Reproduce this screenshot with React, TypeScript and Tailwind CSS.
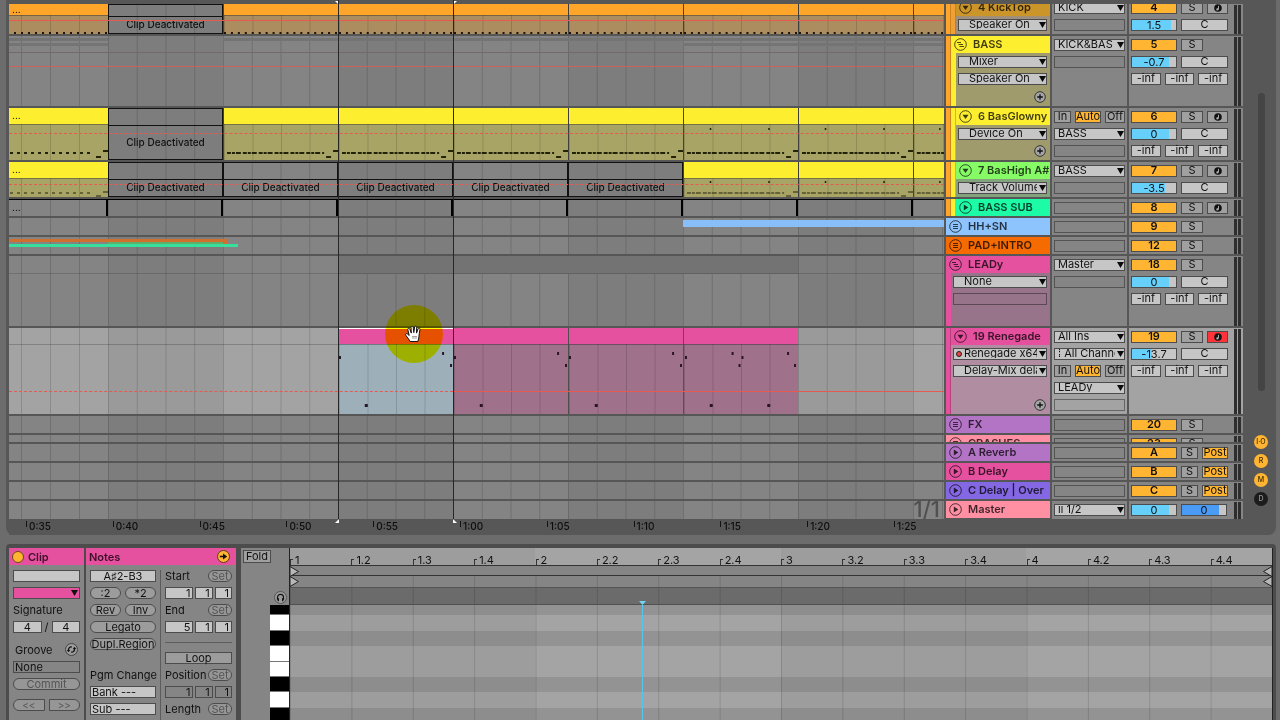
import React from 'react';

type Mixer = {
  num?: string;
  solo?: boolean;
  arm?: 'off' | 'on';
  post?: boolean;
  vol?: [string, number];
  pan?: string;
  cue?: [string, number];
  sends?: boolean;
};

type Track = {
  id: string;
  name: string;
  icon: 'fold' | 'group' | 'lines' | 'play';
  height: string;
  stripes?: string[];
  inner?: string;
  head: string;
  body?: string;
  controls?: string[];
  emptySlot?: boolean;
  add?: boolean;
  record?: boolean;
  io: string[];
  mixer: Mixer;
  selected?: boolean;
  bottom?: boolean;
  cell: (i: number) => React.ReactNode;
  overlay?: React.ReactNode;
};

const CELLS = [0, 1, 2, 3, 4, 5, 6, 7, 8];
const gridCols = 'grid grid-cols-[99fr_115fr_115fr_115fr_115fr_115fr_115fr_115fr_31fr]';

function beatLines(i: number) {
  const size =
    i === 0 ? 'bg-[length:29px_100%] bg-right' : i === 8 ? 'bg-[length:29px_100%]' : 'bg-[length:25%_100%]';
  return `bg-[linear-gradient(to_right,#00000026_1px,transparent_1px)] ${size}`;
}

function viewBox(i: number, h: number) {
  return i === 0 ? `16 0 99 ${h}` : i === 8 ? `0 0 31 ${h}` : `0 0 115 ${h}`;
}

function Dots() {
  return (
    <div className="flex h-full items-center px-[3px] pb-[2px] text-[10px] leading-[10px]">...</div>
  );
}

function Clip({ i, head, body, headHeight, children, more }: {
  i: number; head: string; body: string; headHeight: string; children?: React.ReactNode; more?: boolean;
}) {
  return (
    <div className={`flex h-full flex-col ${i > 0 ? 'border-l border-black/40' : ''}`}>
      <div className={`${headHeight} shrink-0 ${head}`}>{more && <Dots />}</div>
      <div className={`min-h-0 flex-1 border-t border-black/30 ${body} ${beatLines(i)}`}>{children}</div>
    </div>
  );
}

function Deactivated({ headHeight }: { headHeight: string }) {
  return (
    <div className="flex h-full flex-col border border-[#111]">
      <div className={`${headHeight} shrink-0 border-b border-[#111]`} />
      <div className="flex min-h-0 flex-1 items-center justify-center pb-[2px] text-[10px] leading-[12px] font-medium text-[#111]">
        Clip Deactivated
      </div>
    </div>
  );
}

function BassNotes({ i, h, y, low, high }: { i: number; h: number; y: number; low: number; high: number }) {
  const late = i >= 6;
  return (
    <svg className="block h-full w-full" viewBox={viewBox(i, h)} preserveAspectRatio="none">
      <path
        d={`M3 ${y}H101`}
        stroke="#222208"
        strokeWidth={h > 20 ? 2 : 1}
        strokeDasharray={i === 0 ? '3 4' : '4 1 3 1 5 2'}
      />
      <path d={`M103 ${low}h5M110 ${high}h5`} stroke="#222208" strokeWidth={h > 20 ? 2 : 1} />
      {late && <path d={`M26 ${h > 20 ? 4 : 3}h1.500M85 ${h > 20 ? 4 : 3}h1.500`} stroke="#222208" strokeWidth={2} />}
    </svg>
  );
}

function LeadNotes({ i }: { i: number }) {
  const spots: [number, number][] =
    i === 6
      ? [[1, 12], [48, 8], [58, 12], [55, 20], [104, 8], [111, 20]]
      : [[0, 12], [104, 8], [112, 20]];
  const lows = i === 6 ? [26, 84] : [26];
  return (
    <svg className="block h-full w-full" viewBox="0 0 115 69" preserveAspectRatio="none" fill="#2a1526">
      {spots.map(([x, y]) => (
        <rect key={`${x}-${y}`} x={x} y={y - 1} width="2" height="3" />
      ))}
      {lows.map((x) => (
        <rect key={x} x={x} y="59" width="3" height="3" />
      ))}
    </svg>
  );
}

const yellowClip = (i: number, h: number, y: number, low: number, high: number, headHeight: string) => (
  <Clip i={i} head="bg-[#fdee30]" body="bg-[#a8a466]" headHeight={headHeight} more={i === 0}>
    <BassNotes i={i} h={h} y={y} low={low} high={high} />
  </Clip>
);

const tracks: Track[] = [
  {
    id: 'kicktop', name: '4 KickTop', icon: 'fold', height: 'h-[32px]',
    stripes: ['bg-[#ffa52a]', 'bg-[#f0a035]'], head: 'bg-[#cb952a]', body: 'bg-[#a0907a]',
    controls: ['Speaker On'], io: ['KICK', ''],
    mixer: { num: '4', solo: true, arm: 'off', vol: ['1.5', 88], pan: 'C' }, bottom: true,
    cell: (i) =>
      i === 1 ? (
        <Deactivated headHeight="h-[12px]" />
      ) : (
        <Clip i={i} head="bg-[#ffa52a]" body="bg-[#ab8d60]" headHeight="h-[11px]" more={i === 0}>
          <svg className="block h-full w-full" viewBox={viewBox(i, 18)} preserveAspectRatio="none">
            <path d="M0 17H115" stroke="#1c1408" strokeWidth="2" strokeDasharray="2 5" />
          </svg>
        </Clip>
      ),
    overlay: <div className="absolute inset-x-0 top-4 h-px bg-[#e85a50]" />,
  },
  {
    id: 'bass', name: 'BASS', icon: 'group', height: 'h-[72px]',
    stripes: ['bg-[#ffa52a]'], inner: 'bg-[#fdee30]', head: 'bg-[#fdee30]', body: 'bg-[#a09b6c]',
    controls: ['Mixer', 'Speaker On'], add: true, io: ['KICK&BAS', ''],
    mixer: { num: '5', solo: true, vol: ['-0.7', 84], pan: 'C', sends: true },
    cell: (i) => (
      <div className="flex h-full flex-col pt-[2px]">
        <div className={`h-[3px] ${i === 1 ? '' : 'bg-[#747474]'}`} />
        <div className={`mt-[2px] h-[3px] ${i === 0 || i >= 6 ? 'bg-[#747474]' : ''}`} />
        <div className="mt-[6px] border-t border-[#76686a]" />
      </div>
    ),
    overlay: <div className="absolute inset-x-0 top-[30px] h-px bg-[#cc625a]" />,
  },
  {
    id: 'basglowny', name: '6 BasGlowny', icon: 'fold', height: 'h-[54px]',
    stripes: ['bg-[#ffa52a]', 'bg-[#fdee30]'], head: 'bg-[#fdee30]', body: 'bg-[#a09b6c]',
    controls: ['Device On'], add: true, io: ['#monitor', 'BASS', ''],
    mixer: { num: '6', solo: true, arm: 'off', vol: ['0', 84], pan: 'C', sends: true },
    cell: (i) => (i === 1 ? <Deactivated headHeight="h-[17px]" /> : yellowClip(i, 35, 28, 32, 26, 'h-[16px]')),
    overlay: <div className="absolute inset-x-0 top-[25px] border-t border-dashed border-[#e85a50]" />,
  },
  {
    id: 'bashigh', name: '7 BasHigh A#', icon: 'fold', height: 'h-[37px]',
    stripes: ['bg-[#ffa52a]', 'bg-[#fdee30]'], head: 'bg-[#86fb66]', body: 'bg-[#84a27b]',
    controls: ['Track Volume'], io: ['BASS', ''],
    mixer: { num: '7', solo: true, arm: 'off', vol: ['-3.5', 76], pan: 'C' },
    cell: (i) => (i > 0 && i < 6 ? <Deactivated headHeight="h-[17px]" /> : yellowClip(i, 18, 14, 17, 13, 'h-[16px]')),
    overlay: <div className="absolute inset-x-0 top-[22px] border-t border-dashed border-[#e85a50]" />,
  },
  {
    id: 'basssub', name: 'BASS SUB', icon: 'play', height: 'h-[19px]',
    stripes: ['bg-[#ffa52a]', 'bg-[#fdee30]'], head: 'bg-[#1dfba6]', io: [''],
    mixer: { num: '8', solo: true, arm: 'off' },
    cell: (i) => (
      <div className={`h-full border-t border-black ${i < 8 ? 'border-r-2' : ''}`}>
        {i === 0 ? <Dots /> : null}
      </div>
    ),
  },
  {
    id: 'hh', name: 'HH+SN', icon: 'lines', height: 'h-[19px]', head: 'bg-[#8ec4fd]', io: [''],
    mixer: { num: '9', solo: true },
    cell: (i) => (i >= 6 ? <div className="mt-[2px] h-[7px] bg-[#88bffb]" /> : null),
  },
  {
    id: 'pad', name: 'PAD+INTRO', icon: 'lines', height: 'h-[19px]', head: 'bg-[#f66b00]', io: [''],
    mixer: { num: '12', solo: true },
    cell: (i) =>
      i < 3 ? (
        <div className="pt-[2px]">
          <div className={`h-[3px] bg-[#d0702f] ${i === 2 ? 'w-[5px]' : ''}`} />
          <div className={`h-[2px] ${i === 1 ? 'bg-[#5fae6c]' : i === 2 ? 'w-[4px] bg-[#d0702f]' : ''}`} />
          <div className={`h-[3px] bg-[#36e09c] ${i === 2 ? 'w-[15px]' : ''}`} />
        </div>
      ) : null,
  },
  {
    id: 'leady', name: 'LEADy', icon: 'group', height: 'h-[72px]',
    inner: 'bg-[#e6519f]', head: 'bg-[#e6519f]', body: 'bg-[#97748a]',
    controls: ['None'], emptySlot: true, io: ['Master', ''],
    mixer: { num: '18', solo: true, vol: ['0', 84], pan: 'C', sends: true },
    cell: (i) => (
      <div className={`h-[18px] border-b border-black/15 ${i >= 3 && i <= 6 ? 'bg-[#737373]' : ''}`} />
    ),
  },
  {
    id: 'renegade', name: '19 Renegade', icon: 'fold', height: 'h-[88px]',
    stripes: ['bg-[#e6519f]'], head: 'bg-[#e6519f]', body: 'bg-[#b18da2]',
    controls: ['Renegade x64', 'Delay-Mix dela'], record: true, add: true,
    io: ['All Ins', '⁞ All Channels', '#monitor', 'LEADy', ''],
    mixer: { num: '19', solo: true, arm: 'on', vol: ['-13.7', 45], pan: 'C', sends: true }, selected: true,
    cell: (i) =>
      i >= 3 && i <= 6 ? (
        <Clip
          i={i}
          head={i === 3 ? 'bg-[#e6519f] border-t border-white' : 'bg-[#e6519f]'}
          body={i === 3 ? 'bg-[#9db0ba]' : 'bg-[#a0718b]'}
          headHeight="h-[16px]"
        >
          <LeadNotes i={i} />
        </Clip>
      ) : (
        <div className="h-[17px] border-b border-black/20" />
      ),
    overlay: (
      <div className="absolute inset-x-0 top-[63px] flex">
        <div className="w-[47.5%] border-t border-dashed border-[#e85a50]" />
        <div className="h-px flex-1 bg-[#e85a50]" />
      </div>
    ),
  },
  {
    id: 'fx', name: 'FX', icon: 'lines', height: 'h-[19px]', head: 'bg-[#b474c6]', io: [''],
    mixer: { num: '20', solo: true }, cell: () => null,
  },
  {
    id: 'crashes', name: 'CRASHES', icon: 'lines', height: 'h-[9px]', head: 'bg-[#ff90a4]', io: [''],
    mixer: { num: '23', solo: true }, cell: () => null,
  },
  {
    id: 'reverb', name: 'A Reverb', icon: 'play', height: 'h-[19px]', head: 'bg-[#b474c6]', io: [''],
    mixer: { num: 'A', solo: true, post: true }, cell: () => null,
  },
  {
    id: 'delay', name: 'B Delay', icon: 'play', height: 'h-[19px]', head: 'bg-[#e6519f]', io: [''],
    mixer: { num: 'B', solo: true, post: true }, cell: () => null,
  },
  {
    id: 'over', name: 'C Delay | Over', icon: 'play', height: 'h-[19px]', head: 'bg-[#8467e2]', io: [''],
    mixer: { num: 'C', solo: true, post: true }, cell: () => null,
  },
  {
    id: 'master', name: 'Master', icon: 'play', height: 'h-[20px]', head: 'bg-[#ff90a4]', io: ['ⅱ 1/2'],
    mixer: { vol: ['0', 84], cue: ['0', 84] }, cell: () => null,
  },
];

function TrackIcon({ kind }: { kind: Track['icon'] }) {
  return (
    <svg viewBox="0 0 13 13" className="h-[13px] w-[13px] shrink-0" fill="none" stroke="#000000b0" strokeWidth="1">
      <circle cx="6.500" cy="6.500" r="5.800" />
      {kind === 'fold' && <path d="M3.500 4.800h6L6.500 9z" fill="#000000c0" stroke="none" />}
      {kind === 'play' && <path d="M4.800 3.500v6L9.300 6.500z" fill="#000000c0" stroke="none" />}
      {kind === 'lines' && <path d="M4 4.500h5M4 6.500h5M4 8.500h5" />}
      {kind === 'group' && <path d="M3 4.500h4M4.500 6.500h4.500M5.500 8.500h4.500" />}
    </svg>
  );
}

function Dropdown({ label, value, pad = 'pl-[3px]' }: { label: string; value: string; pad?: string }) {
  return (
    <div className="relative h-[12px] shrink-0">
      <select
        aria-label={label}
        className={`block h-full w-full appearance-none overflow-hidden border border-[#4c4c4c] bg-[#c6c6c6] text-clip ${pad} pr-[9px] pb-[1px] text-[11px] leading-[9px] text-[#111]`}
      >
        <option>{value}</option>
      </select>
      <svg className="pointer-events-none absolute top-[3px] right-[1px] h-[6px] w-[7px]" viewBox="0 0 7 6">
        <path d="M0 0h7L3.500 6z" fill="#0a0a0a" />
      </svg>
    </div>
  );
}

const slot = 'h-[12px] shrink-0 border border-[#00000060]';
const boxBtn = 'flex h-[12px] items-center justify-center border border-[#4c4c4c] pb-[1px] text-[11px] leading-[9px] text-[#111]';

function Monitor() {
  return (
    <div className="flex h-[12px] shrink-0 gap-[4px]">
      <button className={`${boxBtn} w-[17px] bg-[#a0a0a0]`}>In</button>
      <button className={`${boxBtn} w-[26px] bg-[#ffb532]`}>Auto</button>
      <button className={`${boxBtn} flex-1 bg-[#a0a0a0]`}>Off</button>
    </div>
  );
}

function Fader({ label, value, pct, color }: { label: string; value: string; pct: number; color: string }) {
  return (
    <input
      aria-label={label}
      defaultValue={value}
      className="h-[12px] w-[46px] border border-[#4c4c4c] pb-[1px] text-center text-[11px] leading-[9px] text-[#111]"
      style={{ background: `linear-gradient(to right, ${color} ${pct}%, #c6c6c6 ${pct}%)` }}
    />
  );
}

function MixerCell({ t }: { t: Track }) {
  const m = t.mixer;
  return (
    <div className="flex w-[97px] flex-col gap-[5px] pt-[3px]">
      {m.num && (
        <div className="flex h-[12px] shrink-0 gap-[4px]">
          <button className={`${boxBtn} w-[46px] bg-[#ffb532] font-semibold`}>{m.num}</button>
          <button className={`${boxBtn} ${m.post ? 'w-[17px]' : 'w-[22px]'} bg-[#a0a0a0]`}>S</button>
          {m.post && <button className={`${boxBtn} flex-1 bg-[#ffb532]`}>Post</button>}
          {m.arm && (
            <button aria-label="Arm" className={`${boxBtn} flex-1 ${m.arm === 'on' ? 'bg-[#ff3339]' : 'bg-[#a0a0a0]'}`}>
              <svg viewBox="0 0 8 8" className="h-[8px] w-[8px]">
                <circle cx="4" cy="4" r="3.800" fill="#111" />
                <path d="M4.500 1.800v3.600" stroke="#bbb" strokeWidth=".9" />
                <circle cx="3.400" cy="5.400" r="1.100" fill="#bbb" />
              </svg>
            </button>
          )}
        </div>
      )}
      {m.vol && (
        <div className="flex h-[12px] shrink-0 gap-[4px]">
          <Fader label={`${t.name} volume`} value={m.vol[0]} pct={m.vol[1]} color="#66cffa" />
          {m.cue ? (
            <Fader label="Cue volume" value={m.cue[0]} pct={m.cue[1]} color="#4a9bf6" />
          ) : (
            <button className={`${boxBtn} flex-1 bg-[#c6c6c6]`}>{m.pan}</button>
          )}
        </div>
      )}
      {m.sends && (
        <div className="grid h-[12px] shrink-0 grid-cols-3 gap-[4px]">
          {['Peak', 'Send A', 'Send B'].map((s) => (
            <button key={s} aria-label={`${s} -inf`} className={`${boxBtn} bg-[#c6c6c6]`}>-inf</button>
          ))}
        </div>
      )}
    </div>
  );
}

function TrackRow({ t }: { t: Track }) {
  const align = t.bottom ? 'justify-end' : '';
  const bg = t.selected ? 'bg-[#a3a3a3]' : 'bg-[#858585]';
  return (
    <div className={`flex ${t.height} gap-[2px] overflow-hidden`}>
      <div className="relative min-w-0 flex-1 overflow-hidden border-b-2 border-[#565656]">
        <div className={`${gridCols} h-full`}>
          {CELLS.map((i) => {
            const shade = t.selected
              ? i % 2 ? 'bg-[#9a9a9a]' : 'bg-[#a3a3a3]'
              : i % 2 ? 'bg-[#7d7d7d]' : 'bg-[#848484]';
            return (
              <div key={i} className={`min-w-0 overflow-hidden ${shade} ${beatLines(i)}`}>
                {t.cell(i)}
              </div>
            );
          })}
        </div>
        {t.overlay}
      </div>
      <div className="flex w-[104px] overflow-hidden border-b-2 border-[#565656]">
        {t.stripes?.map((s, n) => (
          <div key={n} className={`w-[5px] shrink-0 border-r border-black/20 ${s}`} />
        ))}
        <div className={`flex min-w-0 flex-1 flex-col ${align}`}>
          <div className={`flex h-[17px] shrink-0 items-center gap-[6px] pl-[3px] ${t.head}`}>
            <TrackIcon kind={t.icon} />
            <span className="truncate pb-[1px] text-[11px] leading-[14px] font-semibold text-black/75">{t.name}</span>
          </div>
          {t.controls && (
            <div className={`flex ${t.bottom ? 'shrink-0' : 'min-h-0 flex-1'}`}>
              {t.inner && <div className={`w-[5px] shrink-0 ${t.inner}`} />}
              <div className={`relative flex min-w-0 flex-1 flex-col gap-[5px] py-[3px] pr-[3px] pl-[2px] ${t.body}`}>
                {t.controls.map((c, n) => (
                  <div key={c} className="relative">
                    <Dropdown label={`${t.name} control ${n + 1}`} value={c} pad="pl-[10px]" />
                    {t.record && n === 0 && (
                      <span className="absolute top-[3px] left-[3px] h-[6px] w-[6px] rounded-full border border-[#222] bg-[#ee4040]" />
                    )}
                  </div>
                ))}
                {t.emptySlot && <div className={slot} />}
                {t.add && (
                  <button aria-label="Add automation lane" className="absolute right-[4px] bottom-[3px] h-[12px] w-[12px]">
                    <svg viewBox="0 0 12 12" className="h-full w-full">
                      <circle cx="6" cy="6" r="5.300" fill="#a5a5a5" stroke="#333" />
                      <path d="M6 3.200v5.600M3.200 6h5.600" stroke="#111" strokeWidth="1.300" />
                    </svg>
                  </button>
                )}
              </div>
            </div>
          )}
        </div>
      </div>
      <div className={`flex w-[75px] flex-col gap-[5px] overflow-hidden border-b-2 border-[#565656] px-[2px] pt-[3px] ${bg} ${t.bottom ? 'justify-end pb-[3px]' : ''}`}>
        {t.io.map((v, n) =>
          v === '' ? (
            <div key={n} className={slot} />
          ) : v === '#monitor' ? (
            <Monitor key={n} />
          ) : (
            <Dropdown key={n} label={`${t.name} routing ${n + 1}`} value={v} />
          ),
        )}
      </div>
      <div className={`flex w-[114px] gap-[6px] overflow-hidden border-b-2 border-[#565656] pl-[2px] ${bg}`}>
        <div className={`flex w-[97px] shrink-0 flex-col ${t.bottom ? 'justify-end pb-[3px]' : ''}`}>
          <MixerCell t={t} />
        </div>
        <div className="flex h-full shrink-0 gap-[1px] pt-[1px]">
          <div className="w-[3px] bg-[#2e2e2e]" />
          <div className="w-[3px] bg-[#2e2e2e]" />
        </div>
      </div>
    </div>
  );
}

function Hand() {
  return (
    <svg viewBox="0 0 20 20" className="h-[20px] w-[20px]">
      <path
        d="M6.200 17.500C5 15.200 3.200 13.200 1.800 11.300c-.8-1.200.6-2.200 1.700-1.300l1.700 1.500L3.800 5.600c-.3-1.400 1.500-1.900 2-.5l1.500 4L7 3.300c0-1.500 2-1.600 2.200-.1l.6 5.400.8-5.600c.2-1.400 2.100-1.200 2.100.2l-.2 5.900 1.600-4.300c.5-1.300 2.200-.8 1.900.6-.6 2.900-.9 5-1.100 7.400-.1 1.600-.7 3-1 4.700z"
        fill="#fff"
        stroke="#111"
        strokeWidth="1"
        strokeLinejoin="round"
      />
      <path d="M8 12.500h5M8 14h5" stroke="#888" strokeWidth=".8" />
    </svg>
  );
}

const times = ['0:35', '0:40', '0:45', '0:50', '0:55', '1:00', '1:05', '1:10', '1:15', '1:20', '1:25'];

function Arrangement() {
  return (
    <section className="mr-[4px] ml-[6px] flex rounded-b-lg bg-[#575757] pl-[3px]">
      <div className="relative min-w-0 flex-1 pt-[4px]">
        {tracks.map((t) => <TrackRow key={t.id} t={t} />)}
        <div className="mr-[299px] -mt-[2px] grid h-[16px] grid-cols-[170fr_repeat(10,868fr)_500fr] overflow-hidden bg-[#575757]">
          <span />
          {times.map((t) => (
            <span key={t} className="flex min-w-0 gap-[2px] text-[10px] leading-[14px] font-medium text-[#0d0d0d]">
              <i className="mt-[1px] h-[7px] w-[1px] shrink-0 bg-[#111]" />
              {t}
            </span>
          ))}
        </div>
        <div className="pointer-events-none absolute top-0 right-[299px] bottom-[12px] left-0">
          <div className="absolute inset-y-0 left-[35.2%] w-px bg-[#262626]" />
          <div className="absolute inset-y-0 left-[47.5%] w-px bg-[#262626]" />
          <svg className="absolute top-[1px] left-[35.2%] -ml-[3px] h-[3px] w-[3px]" viewBox="0 0 3 3"><path d="M0 0h3v3z" fill="#fff" /></svg>
          <svg className="absolute top-[1px] left-[47.5%] ml-px h-[3px] w-[3px]" viewBox="0 0 3 3"><path d="M0 0h3L0 3z" fill="#fff" /></svg>
          <svg className="absolute bottom-0 left-[35.2%] -ml-[3px] h-[4px] w-[4px]" viewBox="0 0 3 3"><path d="M3 0v3H0z" fill="#fff" /></svg>
          <svg className="absolute bottom-0 left-[47.5%] h-[4px] w-[4px]" viewBox="0 0 3 3"><path d="M0 0v3h3z" fill="#fff" /></svg>
          <div className="absolute right-[4px] bottom-[4px] text-[22px] leading-[20px] font-medium text-[#505050]">1/1</div>
          <div className="absolute top-[305px] left-[40.2%] h-[58px] w-[58px] rounded-full bg-[#ffff00] mix-blend-multiply" />
          <div className="absolute top-[324px] left-[42.2%]"><Hand /></div>
        </div>
      </div>
      <div className="flex w-[33px] shrink-0 flex-col items-center">
        <div className="mt-[93px] ml-[3px] h-[298px] w-[7px] rounded-full bg-[#444]" />
        <div className="mt-[44px] ml-[3px] flex flex-col gap-[5px]">
          {['I·O', 'R', 'M', 'D'].map((s) => (
            <button
              key={s}
              className={`flex h-[14px] w-[14px] items-center justify-center rounded-full text-[7px] leading-[8px] font-medium ${
                s === 'D' ? 'bg-[#1c1c1c] text-[#999]' : 'bg-[#ffb532] text-[#3a2a00]'
              }`}
            >
              {s}
            </button>
          ))}
        </div>
      </div>
    </section>
  );
}

const pill = 'flex h-[12px] items-center justify-center rounded-full border border-[#4c4c4c] bg-[#9c9c9c] text-[11px] leading-[10px] text-[#111]';
const deadPill = 'flex h-[12px] items-center justify-center rounded-full border border-[#4c4c4c] bg-[#969696] text-[11px] leading-[10px] text-[#555]';
const fieldBase = 'h-[12px] min-w-0 border border-[#4c4c4c] text-[11px] leading-[10px] text-[#111]';
const field = `${fieldBase} bg-[#c6c6c6]`;
const cap = 'text-[11px] leading-[12px] text-[#111]';

function Position({ values, label, off }: { values: string[]; label: string; off?: boolean }) {
  return (
    <div className="grid h-[12px] grid-cols-[28fr_17fr_17fr] gap-[2px]">
      {values.map((v, n) => (
        <input key={n} aria-label={`${label} ${n + 1}`} defaultValue={v} className={`${fieldBase} pr-[2px] text-right ${off ? 'bg-[#858585]' : 'bg-[#c6c6c6]'}`} />
      ))}
    </div>
  );
}

function SetRow({ label }: { label: string }) {
  return (
    <div className="flex h-[12px] items-center justify-between">
      <span className={cap}>{label}</span>
      <button disabled className={`${deadPill} w-[24px]`}>Set</button>
    </div>
  );
}

function ClipBox() {
  return (
    <div className="w-[75px] bg-[#858585]">
      <h2 className="flex h-[17px] items-center gap-[4px] bg-[#e6519f] pl-[3px] text-[11px] leading-[14px] font-semibold text-[#3c1029]">
        <span className="h-[12px] w-[12px] rounded-full border border-[#6b4a10] bg-[#ffb532]" />
        Clip
      </h2>
      <div className="flex flex-col gap-[5px] px-[4px] pt-[5px]">
        <input aria-label="Clip name" className={field} />
        <div className="relative h-[12px]">
          <select aria-label="Clip color" className="block h-full w-full appearance-none border border-[#4c4c4c] bg-[#e6519f]" />
          <svg className="pointer-events-none absolute top-[3px] right-[2px] h-[6px] w-[7px]" viewBox="0 0 7 6">
            <path d="M0 0h7L3.500 6z" fill="#111" />
          </svg>
        </div>
        <span className={cap}>Signature</span>
        <div className={`grid h-[12px] grid-cols-[1fr_6px_1fr] gap-[2px] ${cap}`}>
          <input aria-label="Signature numerator" defaultValue="4" className={`${field} text-center`} />
          <span className="text-center">/</span>
          <input aria-label="Signature denominator" defaultValue="4" className={`${field} text-center`} />
        </div>
        <div className={`mt-[5px] flex h-[13px] items-center justify-between px-[2px] ${cap}`}>
          Groove
          <button aria-label="Hot-swap groove">
            <svg viewBox="0 0 13 13" className="h-[13px] w-[13px]">
              <circle cx="6.500" cy="6.500" r="6" fill="#9c9c9c" stroke="#444" />
              <path d="M3.500 7.500C3.200 5 5 3.500 6.800 4M9.500 5.500C9.800 8 8 9.500 6.200 9" fill="none" stroke="#111" strokeWidth="1.400" />
              <path d="M1.800 7h3.400L3.500 9.300zM7.800 6h3.400L9.500 3.700z" fill="#111" />
            </svg>
          </button>
        </div>
        <button className="h-[12px] border border-[#4c4c4c] bg-[#858585] pl-[1px] text-left text-[11px] leading-[10px] text-[#111]">None</button>
        <button disabled className={deadPill}>Commit</button>
        <div className="mt-[4px] grid grid-cols-2 gap-[4px] text-[#555]">
          <button disabled className="flex h-[12px] items-center justify-center rounded-l-full border border-[#4c4c4c] bg-[#969696] text-[10px] leading-[10px]">&lt;&lt;</button>
          <button disabled className="flex h-[12px] items-center justify-center rounded-r-full border border-[#4c4c4c] bg-[#969696] text-[10px] leading-[10px]">&gt;&gt;</button>
        </div>
      </div>
    </div>
  );
}

function NotesBox() {
  return (
    <div className="w-[150px] bg-[#858585]">
      <h2 className="flex h-[17px] items-center justify-between bg-[#e6519f] pr-[6px] pl-[3px] text-[11px] leading-[14px] font-semibold text-[#3c1029]">
        Notes
        <svg viewBox="0 0 13 13" className="h-[13px] w-[13px]">
          <circle cx="6.500" cy="6.500" r="6" fill="#ffb532" stroke="#5b3a10" />
          <path d="M2.800 6.500h4" stroke="#111" strokeWidth="1.600" />
          <path d="M6 3.500l4.200 3-4.200 3z" fill="#111" />
        </svg>
      </h2>
      <div className="flex gap-[4px] px-[4px] pt-[5px]">
        <div className="flex w-[66px] flex-col gap-[5px]">
          <input aria-label="Note range" defaultValue="A♯2-B3" className={`${field} text-center`} />
          <div className="grid grid-cols-2 gap-x-[4px] gap-y-[5px]">
            <button className={pill}>:2</button>
            <button className={pill}>*2</button>
            <button className={pill}>Rev</button>
            <button className={pill}>Inv</button>
          </div>
          <button className={pill}>Legato</button>
          <button className={`${pill} whitespace-nowrap`}>Dupl.Region</button>
          <span className={`mt-[14px] whitespace-nowrap ${cap}`}>Pgm Change</span>
          <input aria-label="Bank" defaultValue="Bank ---" className={`${field} pl-[1px]`} />
          <input aria-label="Sub-bank" defaultValue="Sub ---" className={`${field} pl-[1px]`} />
        </div>
        <div className="flex flex-1 flex-col gap-[5px] border-l border-[#5c5c5c] pb-2 pl-[4px]">
          <SetRow label="Start" />
          <Position label="Start" values={['1', '1', '1']} />
          <SetRow label="End" />
          <Position label="End" values={['5', '1', '1']} />
          <div className="my-[4px] border-t border-[#5c5c5c]" />
          <button className="h-[12px] border border-[#4c4c4c] bg-[#9c9c9c] text-[11px] leading-[10px] text-[#111]">Loop</button>
          <SetRow label="Position" />
          <Position label="Position" values={['1', '1', '1']} off />
          <SetRow label="Length" />
        </div>
      </div>
    </div>
  );
}

const beats = ['1', '1.2', '1.3', '1.4', '2', '2.2', '2.3', '2.4', '3', '3.2', '3.3', '3.4', '4', '4.2', '4.3', '4.4'];
const keys: [string, string, string][] = [
  ['h-[10px]', 'bg-black', 'bg-black/10'],
  ['h-[16px]', 'bg-white', ''],
  ['h-[15px]', 'bg-black', 'bg-black/10'],
  ['h-[16px]', 'bg-white', ''],
  ['h-[15px]', 'bg-white', ''],
  ['h-[15px]', 'bg-black', 'bg-black/10'],
  ['h-[16px]', 'bg-white', ''],
  ['h-[16px]', 'bg-black', 'bg-black/10'],
];
const barShade = 'bg-[linear-gradient(to_right,#9d9d9d_50%,#a4a4a4_50%)] bg-[length:50%_100%]';
const beatShade = 'bg-[linear-gradient(to_right,#00000022_1px,transparent_1px)] bg-[length:6.25%_100%]';

function LoopMark({ flip }: { flip?: boolean }) {
  return (
    <svg viewBox="0 0 9 11" className={`h-[11px] w-[9px] ${flip ? '-scale-x-100' : ''}`}>
      <path d="M0 .5l8.500 5L0 10.500z" fill="#b8b8b8" stroke="#222" />
    </svg>
  );
}

function Editor() {
  return (
    <div className="ml-[3px] flex min-w-0 flex-1 bg-[#858585]">
      <div className="flex w-[48px] shrink-0 flex-col">
        <button className="mt-[2px] ml-[2px] h-[13px] w-[28px] border border-[#4c4c4c] bg-[#a0a0a0] text-[11px] leading-[11px] text-[#111]">Fold</button>
        <button aria-label="Preview" className="mt-[28px] mr-[2px] mb-[1px] self-end">
          <svg viewBox="0 0 13 13" className="h-[13px] w-[13px]">
            <circle cx="6.500" cy="6.500" r="6" fill="#9c9c9c" stroke="#555" />
            <path d="M3.500 8.500V6.300a3 3 0 016 0v2.200" fill="none" stroke="#111" strokeWidth="1.200" />
            <path d="M3 7.200h2v3H3.800zM10 7.200H8v3h1.200z" fill="#111" />
          </svg>
        </button>
        <div className="w-[19px] self-end">
          {keys.map(([h, c], n) => (
            <div key={n} className={`${h} border-b border-[#777] ${c}`} />
          ))}
        </div>
      </div>
      <div className="relative min-w-0 flex-1 border-x border-[#222]">
        <div className={`grid h-[18px] grid-cols-16 border-b border-[#333] ${barShade}`}>
          {beats.map((b) => (
            <span key={b} className="flex gap-[2px] pt-[5px] text-[11px] leading-[14px] text-[#111]">
              <i className="mt-[6px] h-[6px] w-[3px] shrink-0 border-t border-l border-[#333]" />
              {b}
            </span>
          ))}
        </div>
        <div className="flex h-[10px] justify-between border-b border-[#333]"><LoopMark /><LoopMark flip /></div>
        <div className={`flex h-[12px] justify-between border-b border-[#555] ${beatShade}`}><LoopMark /><LoopMark flip /></div>
        <div className={`h-[17px] border-b border-[#505050] bg-[#6b6b6b] ${beatShade}`} />
        <div className={barShade}>
          <div className={beatShade}>
            {keys.map(([h, , r], n) => (
              <div key={n} className={`${h} ${r}`} />
            ))}
          </div>
        </div>
        <div className="absolute top-[53px] bottom-0 left-[35.5%] flex w-[7px] flex-col items-center">
          <svg viewBox="0 0 7 4" className="h-[4px] w-[7px] shrink-0"><path d="M0 0h7L3.500 4z" fill="#6fd6f2" /></svg>
          <div className="w-px flex-1 bg-[#55c4ee]" />
        </div>
      </div>
    </div>
  );
}

export default function App() {
  return (
    <main className="flex h-screen flex-col overflow-hidden bg-[#6c6c6c] font-['Inter','Liberation_Sans',sans-serif]">
      <Arrangement />
      <section className="mt-[9px] mr-[4px] ml-[6px] flex min-h-0 flex-1 gap-[2px] overflow-hidden rounded-t bg-[#4c4c4c] px-[3px] pt-[4px]">
        <ClipBox />
        <NotesBox />
        <Editor />
      </section>
    </main>
  );
}
